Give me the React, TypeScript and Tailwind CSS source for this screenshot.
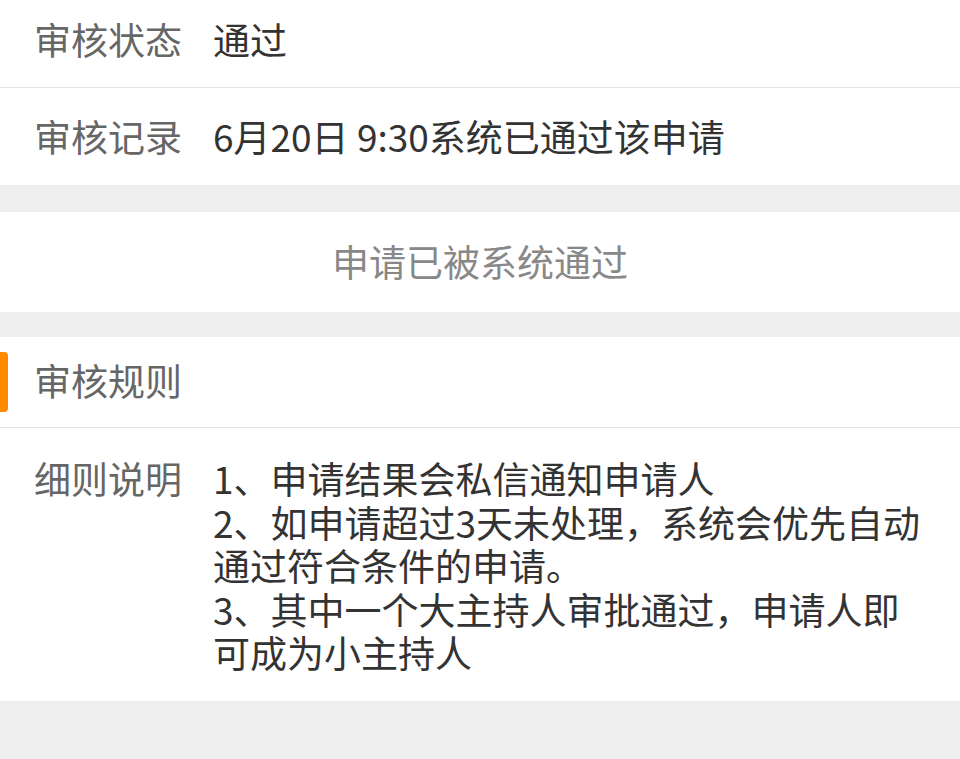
import React from 'react';

const font = { fontFamily: '"Noto Sans CJK SC", "Noto Sans", sans-serif' };

const rules = [
  '1、申请结果会私信通知申请人',
  '2、如申请超过3天未处理，系统会优先自动通过符合条件的申请。',
  '3、其中一个大主持人审批通过，申请人即可成为小主持人',
];

const App = () => {
  return (
    <div className="w-[960px] h-[759px] bg-[#eeeeee] overflow-hidden text-[37px]" style={font}>
      {/* Audit info */}
      <div className="bg-white">
        <div className="h-[88px] pb-[8px] flex items-center border-b border-[#e3e3e3]">
          <span className="w-[213px] pl-[34px] text-[#666666] shrink-0">审核状态</span>
          <span className="text-[#333333]">通过</span>
        </div>
        <div className="h-[97px] flex items-center">
          <span className="w-[213px] pl-[34px] text-[#666666] shrink-0">审核记录</span>
          <span className="text-[#333333]">6月20日 9:30系统已通过该申请</span>
        </div>
      </div>

      {/* Result */}
      <div className="mt-[27px] h-[100px] bg-white flex items-center justify-center text-[#888888]">
        申请已被系统通过
      </div>

      {/* Rules */}
      <div className="mt-[25px] bg-white">
        <div className="h-[91px] flex items-center border-b border-[#e3e3e3]">
          <div className="w-[8px] h-[60px] bg-[#ff8a00] rounded-r-[4px] shrink-0" />
          <span className="pl-[26px] pb-[3px] text-[#666666]">审核规则</span>
        </div>
        <div className="flex pt-[29px] pb-[26px] pr-[30px] leading-[43.5px]">
          <span className="w-[213px] pl-[34px] text-[#666666] shrink-0">细则说明</span>
          <div className="flex-1 text-[#333333]">
            {rules.map((r) => (
              <div key={r}>{r}</div>
            ))}
          </div>
        </div>
      </div>
    </div>
  );
};

export default App;
